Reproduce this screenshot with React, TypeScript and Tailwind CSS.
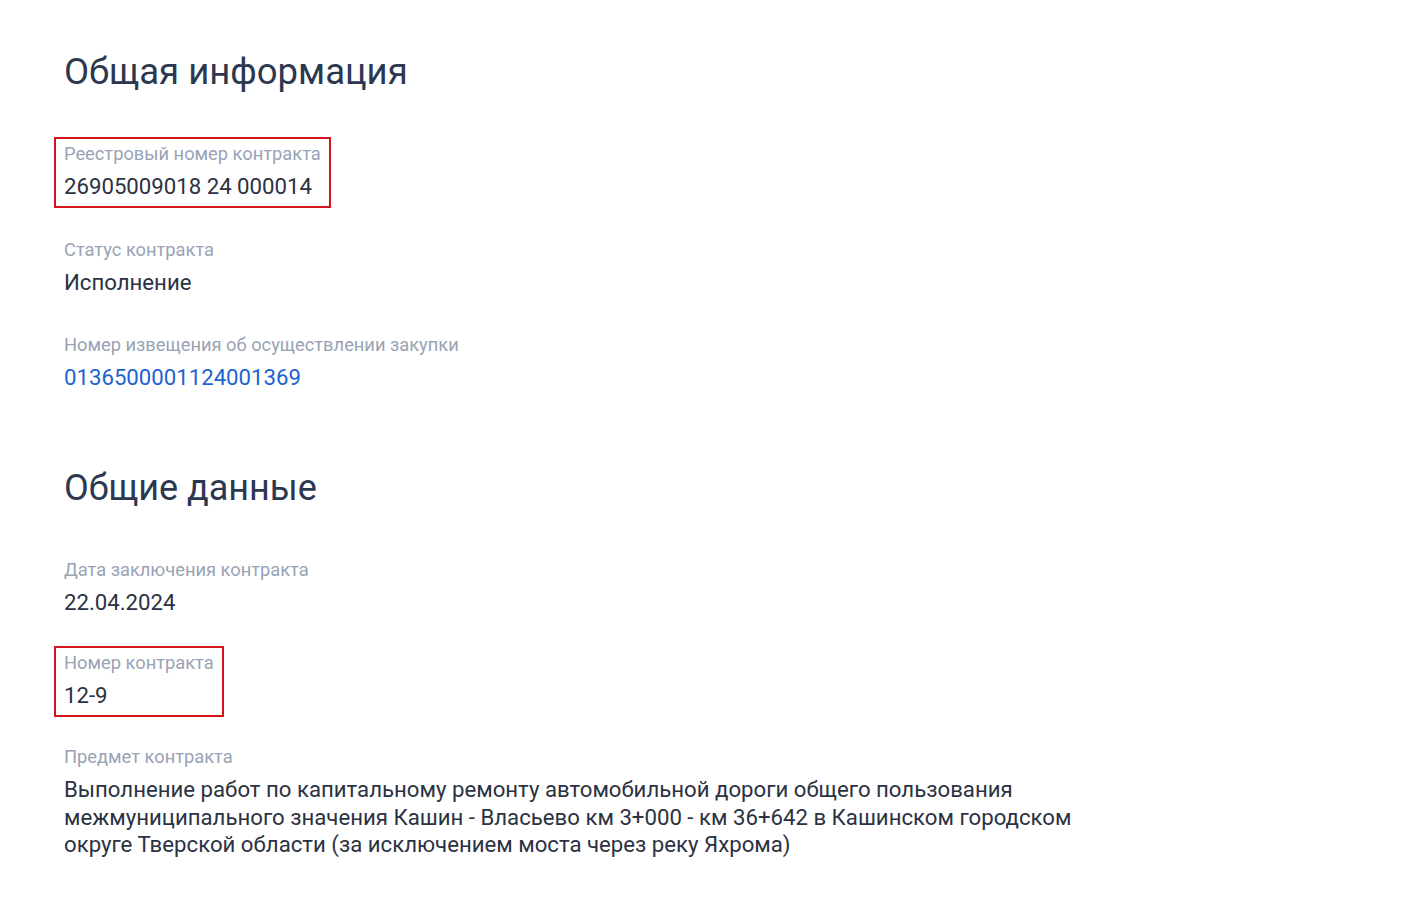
const font = { fontFamily: 'Roboto, "Noto Sans", sans-serif' }

type Field = { label: string; value: string; link?: boolean; marked?: boolean }

const general: Field[] = [
  { label: 'Реестровый номер контракта', value: '26905009018 24 000014', marked: true },
  { label: 'Статус контракта', value: 'Исполнение' },
  { label: 'Номер извещения об осуществлении закупки', value: '0136500001124001369', link: true },
]

const common: Field[] = [
  { label: 'Дата заключения контракта', value: '22.04.2024' },
  { label: 'Номер контракта', value: '12-9', marked: true },
  {
    label: 'Предмет контракта',
    value:
      'Выполнение работ по капитальному ремонту автомобильной дороги общего пользования межмуниципального значения Кашин - Власьево км 3+000 - км 36+642 в Кашинском городском округе Тверской области (за исключением моста через реку Яхрома)',
  },
]

function InfoField({ item }: { item: Field }) {
  return (
    <div
      className={`-ml-[10px] w-fit max-w-[1050px] border-2 px-2 pt-[5px] pb-[5px] ${
        item.marked ? 'border-[#d2151c]' : 'border-transparent'
      }`}
    >
      <div className="text-[18.3px] leading-[20px] text-[#98a3b5]">{item.label}</div>
      <div
        className={`mt-[9px] text-[22.2px] leading-[27.6px] ${
          item.link ? 'text-[#1e63d0]' : 'text-[#2b3242]'
        }`}
      >
        {item.value}
      </div>
    </div>
  )
}

export default function App() {
  return (
    <div className="min-h-screen bg-white pl-[64px] pt-[48px]" style={font}>
      <h2 className="text-[36.5px] leading-[48px] text-[#2b3850]">Общая информация</h2>
      <div className="mt-[41px] flex flex-col gap-[25px]">
        {general.map((f) => (
          <InfoField key={f.label} item={f} />
        ))}
      </div>

      <h2 className="mt-[65px] text-[36px] leading-[48px] text-[#2b3850]">Общие данные</h2>
      <div className="mt-[41px] flex flex-col gap-[23px]">
        {common.map((f) => (
          <InfoField key={f.label} item={f} />
        ))}
      </div>
    </div>
  )
}
